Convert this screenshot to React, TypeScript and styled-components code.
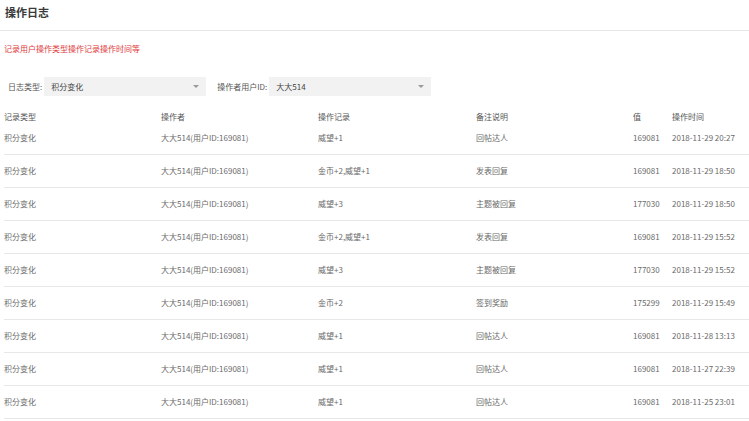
import React from "react";
import styled, { createGlobalStyle } from "styled-components";

const Global = createGlobalStyle`
  html, body { margin: 0; padding: 0; background: #fff; }
  body { font-family: "Noto Sans CJK SC", "Noto Sans", sans-serif; color: #666; }
`;

const Page = styled.div`
  width: 749px;
  height: 421px;
  overflow: hidden;
  box-sizing: border-box;
`;

const TitleBar = styled.div`
  height: 31px;
  box-sizing: border-box;
  border-bottom: 1px solid #e6e6e6;
  padding: 4px 0 0 5px;
  font-size: 11px;
  line-height: 16px;
  font-weight: 700;
  color: #3a3a3a;
`;

const Notice = styled.div`
  margin: 12px 0 0 4px;
  font-size: 8px;
  line-height: 12px;
  color: #e0393b;
`;

const Filters = styled.div`
  display: flex;
  align-items: center;
  margin: 22px 0 0 8px;
  height: 19px;
`;

const FilterLabel = styled.span<{ $gap?: number }>`
  font-size: 8px;
  line-height: 12px;
  color: #555;
  margin-left: ${(p) => p.$gap ?? 0}px;
  margin-right: 2px;
`;

const Select = styled.div`
  position: relative;
  width: 162px;
  height: 19px;
  background: #f2f2f2;
  box-sizing: border-box;
  padding-left: 7px;
  display: flex;
  align-items: center;
  font-size: 8px;
  color: #444;
`;

const Caret = styled.span`
  position: absolute;
  right: 7px;
  top: 8px;
  width: 0;
  height: 0;
  border-left: 3px solid transparent;
  border-right: 3px solid transparent;
  border-top: 3px solid #999;
`;

const Table = styled.div`
  margin-left: 4px;
  font-size: 8px;
`;

const cols = "157px 157px 158px 157px 39px 1fr";

const HeadRow = styled.div`
  display: grid;
  grid-template-columns: ${cols};
  padding-top: 16px;
  height: 26px;
  box-sizing: border-box;
  line-height: 10px;
  color: #555;
`;

const Row = styled.div`
  display: grid;
  grid-template-columns: ${cols};
  align-items: center;
  height: 33px;
  box-sizing: border-box;
  border-bottom: 1px solid #e8e8e8;
  line-height: 12px;
  color: #6a6a6a;
`;

const Cell = styled.div`
  white-space: nowrap;
`;

const rows = [
  ["威望+1", "回帖达人", "169081", "2018-11-29 20:27"],
  ["金币+2,威望+1", "发表回复", "169081", "2018-11-29 18:50"],
  ["威望+3", "主题被回复", "177030", "2018-11-29 18:50"],
  ["金币+2,威望+1", "发表回复", "169081", "2018-11-29 15:52"],
  ["威望+3", "主题被回复", "177030", "2018-11-29 15:52"],
  ["金币+2", "签到奖励", "175299", "2018-11-29 15:49"],
  ["威望+1", "回帖达人", "169081", "2018-11-28 13:13"],
  ["威望+1", "回帖达人", "169081", "2018-11-27 22:39"],
  ["威望+1", "回帖达人", "169081", "2018-11-25 23:01"],
];

export default function App() {
  return (
    <Page>
      <Global />
      <TitleBar>操作日志</TitleBar>
      <Notice>记录用户操作类型操作记录操作时间等</Notice>
      <Filters>
        <FilterLabel>日志类型:</FilterLabel>
        <Select>
          积分变化
          <Caret />
        </Select>
        <FilterLabel $gap={11}>操作者用户ID:</FilterLabel>
        <Select>
          大大514
          <Caret />
        </Select>
      </Filters>
      <Table>
        <HeadRow>
          <Cell>记录类型</Cell>
          <Cell>操作者</Cell>
          <Cell>操作记录</Cell>
          <Cell>备注说明</Cell>
          <Cell>值</Cell>
          <Cell>操作时间</Cell>
        </HeadRow>
        {rows.map((r, i) => (
          <Row key={i}>
            <Cell>积分变化</Cell>
            <Cell>大大514(用户ID:169081)</Cell>
            <Cell>{r[0]}</Cell>
            <Cell>{r[1]}</Cell>
            <Cell>{r[2]}</Cell>
            <Cell>{r[3]}</Cell>
          </Row>
        ))}
      </Table>
    </Page>
  );
}
